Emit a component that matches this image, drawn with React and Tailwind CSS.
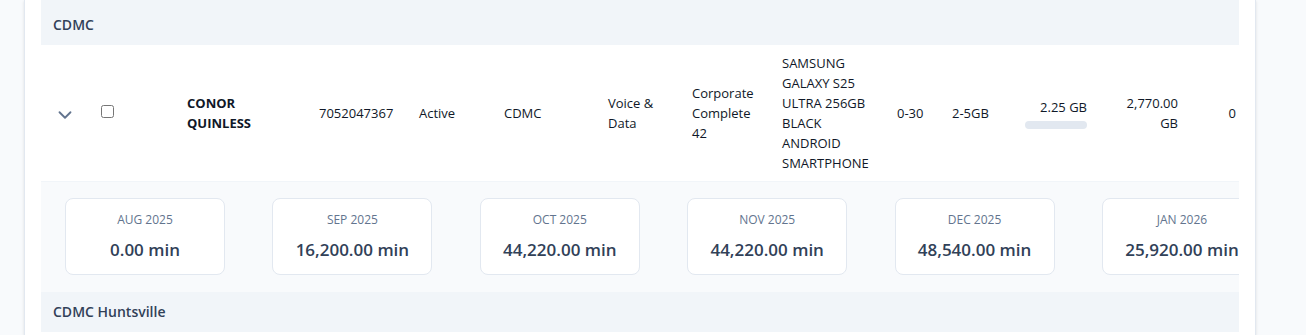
import { ChevronDown } from "lucide-react";

const usage = [
  { month: "AUG 2025", value: "0.00 min" },
  { month: "SEP 2025", value: "16,200.00 min" },
  { month: "OCT 2025", value: "44,220.00 min" },
  { month: "NOV 2025", value: "44,220.00 min" },
  { month: "DEC 2025", value: "48,540.00 min" },
  { month: "JAN 2026", value: "25,920.00 min" },
];

export default function App() {
  return (
    <div
      className="h-[335px] overflow-hidden bg-slate-50"
      style={{ fontFamily: '"Open Sans", "Noto Sans", sans-serif' }}
    >
      <div className="ml-6 h-full w-[1232px] border-x border-slate-200 bg-white px-4 shadow-sm">
        <div className="overflow-hidden">
          {/* Group header */}
          <div className="h-[45px] bg-slate-100 px-3 pt-[15px] text-sm font-semibold leading-5 text-slate-700">
            CDMC
          </div>

          {/* Line row */}
          <div className="flex min-w-max items-center border-b border-slate-100 bg-white text-[13px] leading-5 text-gray-900">
            <div className="flex w-[48px] shrink-0 justify-center pt-1 text-slate-500">
              <ChevronDown size={22} strokeWidth={2} />
            </div>
            <div className="flex w-[86px] shrink-0 pl-3 -mt-[3px]">
              <input type="checkbox" className="m-0 h-[13px] w-[13px]" />
            </div>
            <div className="w-[132px] shrink-0 py-2 pl-3 pr-[40px] font-bold text-gray-900">
              CONOR QUINLESS
            </div>
            <div className="w-[100px] shrink-0 py-2 pl-3">7052047367</div>
            <div className="w-[85px] shrink-0 py-2 pl-3">Active</div>
            <div className="w-[104px] shrink-0 py-2 pl-3">CDMC</div>
            <div className="w-[84px] shrink-0 py-2 px-3">Voice &amp; Data</div>
            <div className="w-[90px] shrink-0 py-2 px-3">Corporate Complete 42</div>
            <div className="w-[115px] shrink-0 py-2 pl-3 pr-2">
              SAMSUNG GALAXY S25 ULTRA 256GB BLACK ANDROID SMARTPHONE
            </div>
            <div className="w-[55px] shrink-0 py-2 pl-3">0-30</div>
            <div className="w-[73px] shrink-0 py-2 pl-3">2-5GB</div>
            <div className="flex w-[86px] shrink-0 flex-col items-end gap-1 px-3 py-2">
              <span>2.25 GB</span>
              <div className="h-2 w-[62px] rounded-full bg-slate-200" />
            </div>
            <div className="w-[91px] shrink-0 px-3 py-2 text-right">2,770.00 GB</div>
            <div className="w-[60px] shrink-0 py-2 pr-[14px] text-right">0</div>
          </div>

          {/* Expanded monthly usage */}
          <div className="flex gap-[47.4px] bg-slate-50 px-6 pt-4 pb-[17px]">
            {usage.map((u) => (
              <div
                key={u.month}
                className="w-[160px] shrink-0 rounded-lg border border-slate-200 bg-white pt-[13px] pb-[10px] text-center"
              >
                <div className="text-xs leading-4 text-slate-500">{u.month}</div>
                <div className="mt-2 text-[17px] font-semibold leading-7 text-slate-700">
                  {u.value}
                </div>
              </div>
            ))}
          </div>

          {/* Next group */}
          <div className="h-10 bg-slate-100 px-3 py-[10px] text-sm font-semibold leading-5 text-slate-700">
            CDMC Huntsville
          </div>
        </div>
      </div>
    </div>
  );
}
